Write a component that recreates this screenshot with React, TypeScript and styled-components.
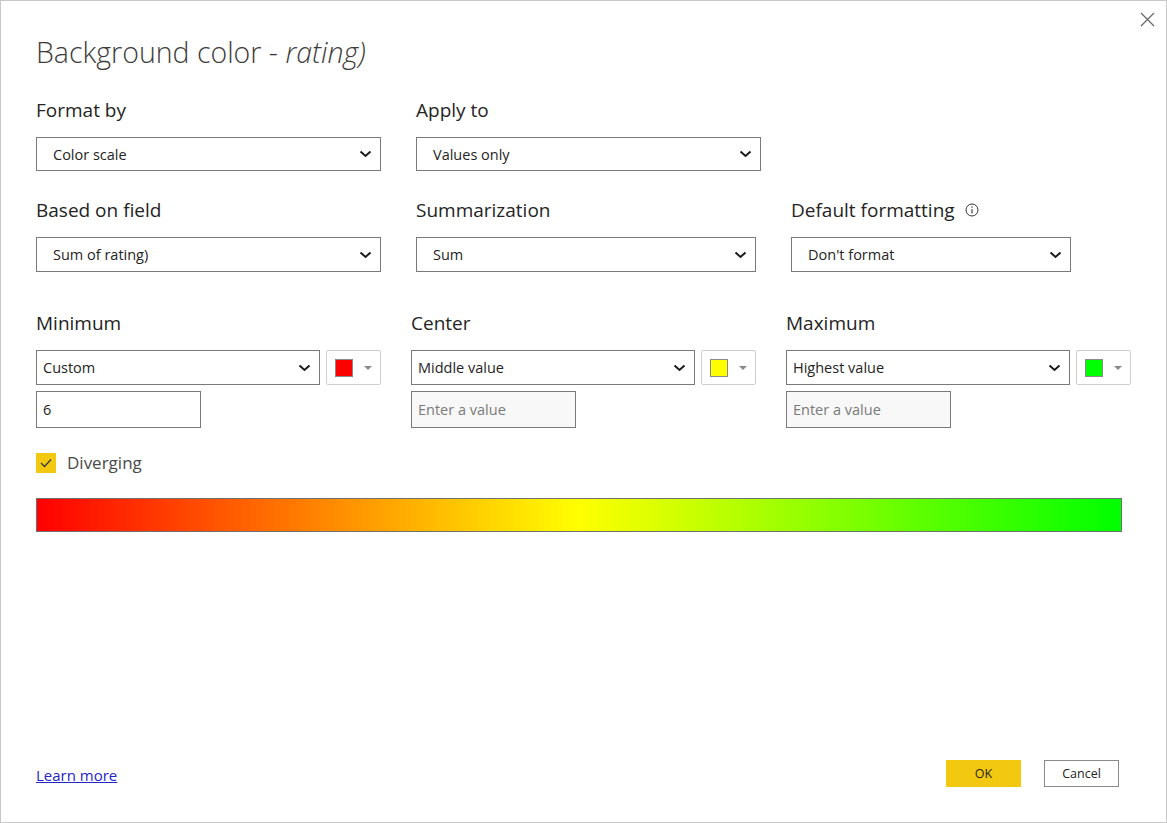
import React from "react";
import styled, { createGlobalStyle } from "styled-components";

const GlobalStyle = createGlobalStyle`
  html, body {
    margin: 0;
    padding: 0;
    background: #ffffff;
  }
  body {
    font-family: "Open Sans", "Noto Sans", "Liberation Sans", sans-serif;
    color: #252423;
  }
`;

const Dialog = styled.div`
  position: relative;
  width: 1167px;
  height: 823px;
  box-sizing: border-box;
  border: 1px solid #c8c8c8;
  background: #ffffff;
  display: flex;
  flex-direction: column;
  padding: 31px 47px 35px 35px;
`;

const CloseButton = styled.button`
  position: absolute;
  top: 10px;
  right: 11px;
  width: 16px;
  height: 16px;
  padding: 0;
  border: none;
  background: transparent;
  display: flex;
  align-items: center;
  justify-content: center;
`;

const Title = styled.h1`
  margin: 0 0 25px;
  font-size: 28.5px;
  line-height: 40px;
  font-weight: 300;
  color: #3e3d3c;
  white-space: nowrap;

  em {
    font-style: italic;
  }
`;

const Row = styled.div<{ $gap?: number; $mb?: number }>`
  display: flex;
  gap: ${(p) => p.$gap ?? 35}px;
  margin-bottom: ${(p) => p.$mb ?? 26}px;
`;

const Field = styled.div<{ $width: number }>`
  width: ${(p) => p.$width}px;
  display: flex;
  flex-direction: column;
  gap: 14px;
`;

const Label = styled.div`
  font-size: 19px;
  line-height: 26px;
  color: #252423;
  display: flex;
  align-items: center;
  gap: 10px;
  white-space: nowrap;
`;

const SelectBox = styled.div<{ $width?: number; $height?: number; $pad?: number }>`
  box-sizing: border-box;
  width: ${(p) => (p.$width ? `${p.$width}px` : "100%")};
  height: ${(p) => p.$height ?? 34}px;
  border: 1px solid #7a7a7a;
  background: #ffffff;
  display: flex;
  align-items: center;
  justify-content: space-between;
  padding: 0 8px 0 ${(p) => p.$pad ?? 16}px;
  font-size: 14.5px;
  color: #252423;
`;

const ControlLine = styled.div`
  display: flex;
  gap: 6px;
`;

const ColorButton = styled.div`
  box-sizing: border-box;
  width: 55px;
  height: 35px;
  border: 1px solid #cfcfcf;
  border-radius: 2px;
  display: flex;
  align-items: center;
  padding-left: 8px;
  gap: 11px;
`;

const Swatch = styled.span<{ $color: string }>`
  width: 18px;
  height: 18px;
  box-sizing: border-box;
  border: 1px solid #8a8a8a;
  background: ${(p) => p.$color};
`;

const Caret = styled.span`
  width: 0;
  height: 0;
  border-left: 4px solid transparent;
  border-right: 4px solid transparent;
  border-top: 4px solid #8a8a8a;
`;

const ValueInput = styled.div<{ $disabled?: boolean }>`
  box-sizing: border-box;
  width: 165px;
  height: 37px;
  margin-top: 6px;
  border: 1px solid #7a7a7a;
  background: ${(p) => (p.$disabled ? "#f8f8f8" : "#ffffff")};
  display: flex;
  align-items: center;
  padding-left: 6px;
  font-size: 14.5px;
  color: ${(p) => (p.$disabled ? "#7a7a7a" : "#252423")};
`;

const CheckRow = styled.label`
  display: flex;
  align-items: center;
  gap: 11px;
  height: 20px;
  margin: 25px 0 25px;
  font-size: 17px;
  line-height: 20px;
  color: #4a4a4a;
`;

const CheckBox = styled.span`
  width: 20px;
  height: 20px;
  background: #f2c811;
  display: flex;
  align-items: center;
  justify-content: center;
`;

const GradientBar = styled.div`
  box-sizing: border-box;
  width: 1086px;
  height: 34px;
  border: 1px solid #707070;
  background: linear-gradient(to right, #ff0000 0%, #ffff00 50%, #00ff00 100%);
`;

const Footer = styled.div`
  margin-top: auto;
  display: flex;
  align-items: center;
`;

const LearnMore = styled.a`
  font-size: 15px;
  color: #2424c8;
  text-decoration: underline;
  margin-right: auto;
  padding-top: 2px;
`;

const Button = styled.button<{ $primary?: boolean }>`
  box-sizing: border-box;
  width: 75px;
  height: 27px;
  margin-left: 23px;
  font-family: inherit;
  font-size: 12.5px;
  color: #252423;
  background: ${(p) => (p.$primary ? "#f2c811" : "#ffffff")};
  border: ${(p) => (p.$primary ? "none" : "1px solid #8a8a8a")};
  padding: 0;
`;

const Chevron = () => (
  <svg width="13" height="8" viewBox="0 0 13 8">
    <polyline points="1.5,1.5 6.5,6 11.5,1.5" fill="none" stroke="#1b1b1b" strokeWidth="2" />
  </svg>
);

const InfoIcon = () => (
  <svg width="14" height="14" viewBox="0 0 14 14">
    <circle cx="7" cy="7" r="6" fill="none" stroke="#333" strokeWidth="1" />
    <line x1="7" y1="6" x2="7" y2="10.5" stroke="#333" strokeWidth="1.1" />
    <circle cx="7" cy="4" r="0.75" fill="#333" />
  </svg>
);

type SelectProps = { value: string; width?: number; height?: number; pad?: number };

const Select = ({ value, width, height, pad }: SelectProps) => (
  <SelectBox $width={width} $height={height} $pad={pad}>
    <span>{value}</span>
    <Chevron />
  </SelectBox>
);

type StopProps = { label: string; value: string; color: string; input: string; disabled?: boolean };

const StopField = ({ label, value, color, input, disabled }: StopProps) => (
  <Field $width={345}>
    <Label>{label}</Label>
    <div>
      <ControlLine>
        <Select value={value} width={285} height={35} pad={6} />
        <ColorButton>
          <Swatch $color={color} />
          <Caret />
        </ColorButton>
      </ControlLine>
      <ValueInput $disabled={disabled}>{input}</ValueInput>
    </div>
  </Field>
);

export default function App() {
  return (
    <>
      <GlobalStyle />
      <Dialog>
        <CloseButton aria-label="Close">
          <svg width="15" height="15" viewBox="0 0 15 15">
            <path d="M1 1 L14 14 M14 1 L1 14" stroke="#666" strokeWidth="1.2" />
          </svg>
        </CloseButton>
        <Title>
          Background color - <em>rating)</em>
        </Title>

        <Row>
          <Field $width={345}>
            <Label>Format by</Label>
            <Select value="Color scale" />
          </Field>
          <Field $width={345}>
            <Label>Apply to</Label>
            <Select value="Values only" />
          </Field>
        </Row>

        <Row $mb={38}>
          <Field $width={345}>
            <Label>Based on field</Label>
            <Select value="Sum of rating)" height={35} />
          </Field>
          <Field $width={340}>
            <Label>Summarization</Label>
            <Select value="Sum" height={35} />
          </Field>
          <Field $width={280}>
            <Label>
              Default formatting <InfoIcon />
            </Label>
            <Select value="Don't format" height={35} />
          </Field>
        </Row>

        <Row $gap={30} $mb={0}>
          <StopField label="Minimum" value="Custom" color="#ff0000" input="6" />
          <StopField label="Center" value="Middle value" color="#ffff00" input="Enter a value" disabled />
          <StopField label="Maximum" value="Highest value" color="#00ff00" input="Enter a value" disabled />
        </Row>

        <CheckRow>
          <CheckBox>
            <svg width="12" height="10" viewBox="0 0 12 10">
              <polyline points="1,5 4.5,8.5 11,1.5" fill="none" stroke="#3b3a39" strokeWidth="1.3" />
            </svg>
          </CheckBox>
          Diverging
        </CheckRow>

        <GradientBar />

        <Footer>
          <LearnMore href="#">Learn more</LearnMore>
          <Button $primary>OK</Button>
          <Button>Cancel</Button>
        </Footer>
      </Dialog>
    </>
  );
}
